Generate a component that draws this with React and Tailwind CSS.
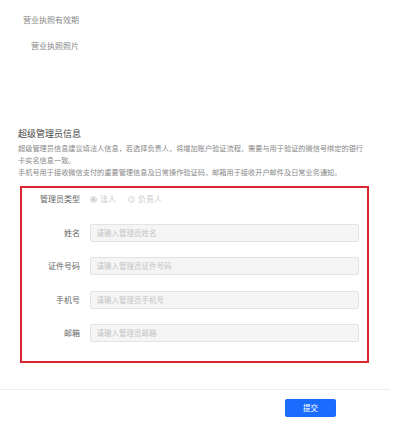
export default function App() {
  const font = { fontFamily: '"Noto Sans CJK SC", "Noto Sans", sans-serif' };
  const rows = [
    ["姓名", "请输入管理员姓名"],
    ["证件号码", "请输入管理员证件号码"],
    ["手机号", "请输入管理员手机号"],
    ["邮箱", "请输入管理员邮箱"],
  ];
  return (
    <div className="w-[397px] h-[433px] bg-white overflow-hidden flex flex-col" style={font}>
      <div className="h-[40px] flex items-center">
        <div className="w-[79px] text-right text-[8px] leading-[12px] text-[#888]">营业执照有效期</div>
      </div>
      <div className="h-[12px] flex items-center">
        <div className="w-[79px] text-right text-[8px] leading-[12px] text-[#888]">营业执照照片</div>
      </div>
      <div className="mt-[75px] ml-[18px] h-[14px] text-[9px] leading-[14px] text-[#444]">超级管理员信息</div>
      <div className="mt-[1px] ml-[18px] w-[350px] text-[7.2px] leading-[12px] text-[#888]">
        <div>超级管理员信息建议填法人信息，若选择负责人，将增加账户验证流程，需要与用于验证的微信号绑定的银行</div>
        <div>卡实名信息一致。</div>
        <div>手机号用于接收微信支付的重要管理信息及日常操作验证码，邮箱用于接收开户邮件及日常业务通知。</div>
      </div>
      <div className="mt-[8px] ml-[20px] w-[349px] h-[177px] border-2 border-[#d9262f] flex flex-col gap-[15.5px] pt-[2px]">
        <div className="h-[18px] flex items-center">
          <div className="w-[58px] text-right text-[8px] text-[#666]">管理员类型</div>
          <div className="ml-[10px] flex items-center">
            <span className="w-[7px] h-[7px] rounded-full border border-[#d4d4d4] bg-[#f3f3f3] flex items-center justify-center">
              <span className="w-[3px] h-[3px] rounded-full bg-[#c4c4c4]" />
            </span>
            <span className="ml-[3px] text-[8px] text-[#c4c4c4]">法人</span>
            <span className="ml-[12px] w-[7px] h-[7px] rounded-full border border-[#dcdcdc] bg-[#f3f3f3]" />
            <span className="ml-[3px] text-[8px] text-[#cccccc]">负责人</span>
          </div>
        </div>
        {rows.map(([label, ph]) => (
          <div key={label} className="h-[18px] flex items-center">
            <div className="w-[58px] text-right text-[8px] text-[#666]">{label}</div>
            <div className="ml-[9.5px] w-[269px] h-[18px] bg-[#f5f5f5] border border-[#e3e3e3] rounded-[2px] flex items-center pl-[6px] text-[7.5px] text-[#c4c4c4]">
              {ph}
            </div>
          </div>
        ))}
      </div>
      <div className="mt-[26px] w-[390px] h-px bg-[#ececec]" />
      <div className="mt-[9px] flex justify-end pr-[61px]">
        <div className="w-[51px] h-[18px] rounded-[2px] bg-[#1a6cff] text-white text-[7.5px] flex items-center justify-center">提交</div>
      </div>
    </div>
  );
}
